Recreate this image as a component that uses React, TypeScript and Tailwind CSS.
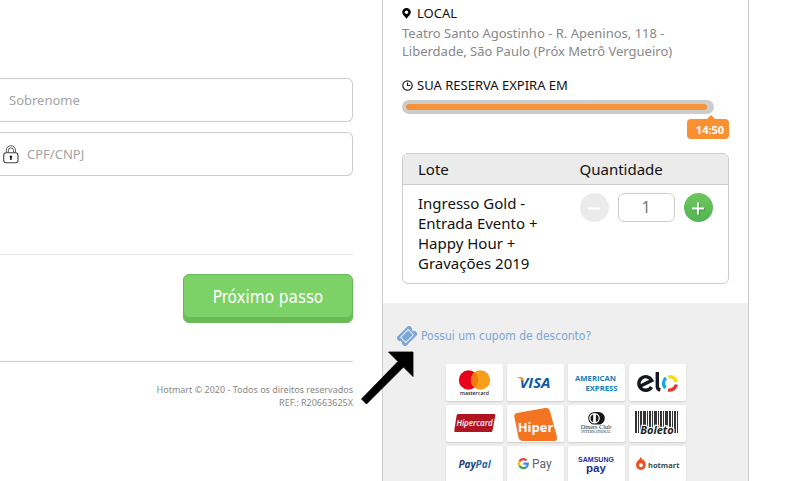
import { useState } from "react"
import type { ReactNode } from "react"

const MastercardLogo = () => (
  <svg viewBox="0 0 57 37" className="w-full h-full" aria-label="mastercard">
    <circle cx="22.5" cy="16" r="9.7" fill="#eb001b" />
    <circle cx="34.5" cy="16" r="9.7" fill="#f79e1b" />
    <path d="M28.5 8.4a9.7 9.7 0 0 1 0 15.2a9.7 9.7 0 0 1 0-15.2z" fill="#f47a10" />
    <text x="28.5" y="30.5" textAnchor="middle" fontSize="5.2" fontWeight="600" fill="#222">
      mastercard
    </text>
  </svg>
)

const VisaLogo = () => (
  <svg viewBox="0 0 57 37" className="w-full h-full" aria-label="Visa">
    <text x="28" y="24" textAnchor="middle" fontSize="15" fontWeight="700" fontStyle="italic" fill="#0e5ba4">
      VISA
    </text>
    <path d="M10 13h4.200c1 0 1.500.4 1.700 1.300l.9 4.200c-1.200-2.500-3.500-4.300-6.800-5.100z" fill="#e9a23b" />
  </svg>
)

const AmexLogo = () => (
  <svg viewBox="0 0 57 37" className="w-full h-full" aria-label="American Express">
    <g fontSize="7.7" fontWeight="700" fill="#0f80b8">
      <text x="27.5" y="17" textAnchor="middle">AMERICAN</text>
      <text x="33.5" y="26.5" textAnchor="middle">EXPRESS</text>
    </g>
  </svg>
)

const EloLogo = () => (
  <svg viewBox="0 0 57 37" className="w-full h-full" aria-label="elo">
    <g fill="none" strokeWidth="3.4">
      <path d="M11.5 22L22.8 16.500A6.800 6.800 0 1 0 22.500 23" stroke="#15171f" />
      <path d="M28.3 8v14.500c0 1.800 1 3 3 3.700" stroke="#15171f" />
      <path d="M37 14a6.800 6.800 0 0 0-.6 10" stroke="#19a5df" />
      <path d="M39.2 12.800a6.900 6.900 0 0 1 8.200 5.400" stroke="#fbd914" />
      <path d="M47.3 20.500a6.900 6.900 0 0 1-8.300 5.400" stroke="#e5352b" />
    </g>
  </svg>
)

const HipercardLogo = () => (
  <svg viewBox="0 0 57 37" className="w-full h-full" aria-label="Hipercard">
    <path d="M12.500 9h35.500c1 0 1.500.6 1.300 1.500l-2.800 14.900c-.2 1-.9 1.600-1.900 1.600h-35c-1 0-1.500-.6-1.300-1.500l2.300-14.900c.2-1 .9-1.600 1.900-1.600z" fill="#b01421" />
    <text x="28.5" y="20.5" textAnchor="middle" fontSize="8" fontStyle="italic" fontWeight="600" fill="#fff">
      Hipercard
    </text>
  </svg>
)

const HiperLogo = () => (
  <svg viewBox="0 0 57 37" className="w-full h-full" aria-label="Hiper">
    <path d="M10 8L38 3c2.600-.4 4.500.6 5 3.200L50 32c.6 2.500-.5 4-2.500 4H16c-2.600 0-4-1.200-4.500-3.500L7.500 13c-.6-2.800 0-4.500 2.500-5z" fill="#f37421" />
    <text x="28.5" y="26.5" textAnchor="middle" fontSize="13" fontWeight="700" fill="#fff">
      Hiper
    </text>
  </svg>
)

const DinersLogo = () => (
  <svg viewBox="0 0 57 37" className="w-full h-full" aria-label="Diners Club International">
    <path d="M26.500 7h4a6.300 6.300 0 0 1 0 12.600h-4a6.300 6.300 0 0 1 0-12.600z" fill="#171717" />
    <circle cx="26.5" cy="13.3" r="5.3" fill="#fff" />
    <path d="M25.200 9.500a4 4 0 0 0 0 7.600zM27.900 9.500a4 4 0 0 1 0 7.600z" fill="#171717" />
    <g fill="#222" fontFamily="Liberation Serif, serif" textAnchor="middle">
      <text x="28" y="24.3" fontSize="6.3">Diners Club</text>
      <text x="28" y="28.4" fontSize="3.7">INTERNATIONAL</text>
    </g>
  </svg>
)

const bars = [
  [6, 2], [9, 1], [11, 2], [14, 3], [18, 1], [20, 2], [23, 1], [25, 3], [29, 1],
  [31, 2], [34, 1], [36, 3], [40, 2], [43, 1], [45, 2], [48, 1],
]

const BoletoLogo = () => (
  <svg viewBox="0 0 57 37" className="w-full h-full" aria-label="Boleto">
    {bars.map(([x, width]) => (
      <rect key={x} x={x} y="6" width={width} height="22" fill="#333" />
    ))}
    <text
      x="28"
      y="29"
      textAnchor="middle"
      fontSize="11"
      fontWeight="700"
      fontStyle="italic"
      fill="#1c1c1c"
      stroke="#fff"
      strokeWidth="2.5"
      paintOrder="stroke"
    >
      Boleto
    </text>
  </svg>
)

const PaypalLogo = () => (
  <svg viewBox="0 0 57 37" className="w-full h-full" aria-label="PayPal">
    <text x="28.5" y="22" textAnchor="middle" fontSize="10" fontWeight="700" fontStyle="italic" fill="#1f3c78">
      Pay<tspan fill="#2b6aa8">Pal</tspan>
    </text>
  </svg>
)

const GooglePayLogo = () => (
  <svg viewBox="0 0 57 37" className="w-full h-full" aria-label="Google Pay">
    <g fill="none" strokeWidth="2.2">
      <path d="M19.500 14.500a4.500 4.500 0 0 0-7 .8" stroke="#ea4335" />
      <path d="M12.500 15.300a4.700 4.700 0 0 0 0 4.600" stroke="#fbbc04" />
      <path d="M12.500 19.900a4.600 4.600 0 0 0 6.800 1.300" stroke="#34a853" />
      <path d="M19.300 21.200c1-.9 1.500-2 1.500-3.500h-4.500" stroke="#4285f4" />
    </g>
    <text x="25" y="22" fontSize="12" fontFamily="Roboto, sans-serif" fill="#5f6368">
      Pay
    </text>
  </svg>
)

const SamsungPayLogo = () => (
  <svg viewBox="0 0 57 37" className="w-full h-full" aria-label="Samsung Pay">
    <g fill="#1e2f98" textAnchor="middle" fontFamily="Liberation Sans, sans-serif" fontWeight="700">
      <text x="28" y="15.5" fontSize="7">SAMSUNG</text>
      <text x="28" y="26" fontSize="11.5">pay</text>
    </g>
  </svg>
)

const HotmartLogo = () => (
  <svg viewBox="0 0 57 37" className="w-full h-full" aria-label="hotmart">
    <path d="M11.500 11c1.300.8 1.700 2 1.600 3.300c.7-.2 1-.8 1.100-1.400c1.600 1.800 2.600 4 2.600 6.200a4.900 4.900 0 0 1-9.800 0c0-2.400 1.200-3.800 2.600-5c1-.9 1.700-1.700 1.900-3.100z" fill="#ee4e23" />
    <circle cx="11.9" cy="19.2" r="2" fill="#fff" />
    <text x="19" y="21.5" fontSize="7.5" fontWeight="700" fill="#37474f">
      hotmart
    </text>
  </svg>
)

const payments: { name: string; logo: ReactNode }[] = [
  { name: "mastercard", logo: <MastercardLogo /> },
  { name: "visa", logo: <VisaLogo /> },
  { name: "amex", logo: <AmexLogo /> },
  { name: "elo", logo: <EloLogo /> },
  { name: "hipercard", logo: <HipercardLogo /> },
  { name: "hiper", logo: <HiperLogo /> },
  { name: "diners", logo: <DinersLogo /> },
  { name: "boleto", logo: <BoletoLogo /> },
  { name: "paypal", logo: <PaypalLogo /> },
  { name: "gpay", logo: <GooglePayLogo /> },
  { name: "samsung", logo: <SamsungPayLogo /> },
  { name: "hotmart", logo: <HotmartLogo /> },
]

const BuyerForm = () => (
  <form className="flex-1 min-w-0 pt-[78px] pr-[29px]" onSubmit={(e) => e.preventDefault()}>
    <div className="flex flex-col gap-[10px]">
      <input
        type="text"
        aria-label="Sobrenome"
        placeholder="Sobrenome"
        className="w-full h-11 pl-[9px] text-[13px] border border-l-0 border-[#ccc] rounded-r-md placeholder:text-[#a3a3a3] outline-none"
      />
      <label className="flex items-center h-11 pl-[3px] gap-2 border border-l-0 border-[#ccc] rounded-r-md">
        <svg viewBox="0 0 16 19" className="w-4 h-[19px] shrink-0" fill="none" stroke="#444">
          <rect x=".7" y="7.7" width="14.3" height="10" rx="2.5" strokeWidth="1.1" />
          <path d="M3.300 7.500V5.300a4.600 4.600 0 0 1 9.200 0v2.200M5.300 7.500V5.500a2.600 2.600 0 0 1 5.200 0v2" strokeWidth=".9" />
          <path d="M7.900 11v4" stroke="#111" strokeWidth="1.5" />
          <circle cx="7.9" cy="11.7" r=".8" fill="#111" stroke="#111" />
        </svg>
        <input
          type="text"
          aria-label="CPF/CNPJ"
          placeholder="CPF/CNPJ"
          className="flex-1 min-w-0 h-full text-[13px] placeholder:text-[#a3a3a3] outline-none"
        />
      </label>
    </div>
    <div className="mt-[78px] pt-[19px] border-t border-[#e8e8e8] flex justify-end">
      <button
        type="submit"
        className="w-[170px] h-[49px] pb-[2px] rounded-md border border-[#68b657] bg-[#7cd167] text-[17px] text-white shadow-[inset_0_-5px_0_#6abb58] font-['DejaVu_Sans_Condensed','Noto_Sans',sans-serif]"
      >
        Próximo passo
      </button>
    </div>
    <footer className="mt-[38px] pt-[21px] border-t border-[#ccc] text-right text-[9px] leading-[13px] text-[#888]">
      <p>Hotmart © 2020 - Todos os direitos reservados</p>
      <p>REF.: R20663625X</p>
    </footer>
  </form>
)

const LotTable = () => {
  const [quantity, setQuantity] = useState(1)

  return (
    <div className="mt-[39px] border border-[#ccc] rounded-md overflow-hidden">
      <table className="w-full table-fixed text-left text-[15px] text-[#111]">
        <thead className="bg-[#ebebeb]">
          <tr className="h-[30px] border-b border-[#ccc]">
            <th className="w-1/2 pl-[15px] font-normal">Lote</th>
            <th className="w-1/2 pl-[14px] font-normal">Quantidade</th>
          </tr>
        </thead>
        <tbody>
          <tr className="align-top">
            <td className="pl-[15px] pt-2 pb-[10px] leading-5">
              Ingresso Gold -<br />
              Entrada Evento +<br />
              Happy Hour +<br />
              Gravações 2019
            </td>
            <td className="pl-[14px] pt-2">
              <div className="flex items-center gap-[9px]">
                <button
                  type="button"
                  aria-label="Diminuir"
                  onClick={() => setQuantity(Math.max(1, quantity - 1))}
                  className="flex items-center justify-center w-[29px] h-[29px] rounded-full bg-[#ebebeb]"
                >
                  <svg viewBox="0 0 14 14" className="w-[14px] h-[14px]" stroke="#fff" strokeWidth="2">
                    <path d="M1 8.500h12" />
                  </svg>
                </button>
                <input
                  type="text"
                  aria-label="Quantidade"
                  value={quantity}
                  onChange={(e) => setQuantity(Number(e.target.value) || 1)}
                  className="w-[57px] h-[29px] text-center text-base text-[#777] border border-[#ccc] rounded-md outline-none"
                />
                <button
                  type="button"
                  aria-label="Aumentar"
                  onClick={() => setQuantity(quantity + 1)}
                  className="flex items-center justify-center w-[29px] h-[29px] rounded-full bg-linear-to-b from-[#6cc75c] to-[#55b355]"
                >
                  <svg viewBox="0 0 16 16" className="w-4 h-4" strokeWidth="2">
                    <path d="M3 10.500h12M9 4.500v12" stroke="#3f9440" />
                    <path d="M2 9.500h12M8 3.500v12" stroke="#fff" />
                  </svg>
                </button>
              </div>
            </td>
          </tr>
        </tbody>
      </table>
    </div>
  )
}

const OrderSummary = () => (
  <aside className="w-[367px] mr-[51px] shrink-0 flex flex-col border-x border-[#ccc]">
    <section className="pt-1 px-[19px] pb-[19px]">
      <h2 className="flex items-center gap-[6px] text-[13px] leading-[18px] text-[#111]">
        <svg viewBox="0 0 9 11" className="w-[9px] h-[11px]">
          <path d="M4.500 0a4.300 4.300 0 0 1 4.300 4.300c0 2.300-2.600 4.200-4.300 6.500C2.800 8.500.2 6.600.2 4.300A4.300 4.300 0 0 1 4.500 0z" fill="#000" />
          <circle cx="4.5" cy="4.2" r="1.7" fill="#fff" />
        </svg>
        LOCAL
      </h2>
      <p className="mt-[2px] text-[13px] leading-[18px] text-[#888]">
        Teatro Santo Agostinho - R. Apeninos, 118 -<br />
        Liberdade, São Paulo (Próx Metrô Vergueiro)
      </p>
      <h2 className="mt-4 flex items-center gap-1 text-[13px] leading-[18px] text-[#111]">
        <svg viewBox="0 0 11 11" className="w-[11px] h-[11px]" fill="none" stroke="#222" strokeWidth="1.2">
          <circle cx="5.5" cy="5.5" r="4.7" />
          <path d="M5.500 2.500v3h3" />
        </svg>
        SUA RESERVA EXPIRA EM
      </h2>
      <div className="relative mt-[6px] mr-[15px] h-[14px] px-1 py-[4px] rounded-full bg-[#ccc]">
        <div className="h-[6px] mr-[3px] rounded-full bg-[#f5923b]" />
        <div className="absolute -right-[15px] top-[19px] w-[42px] h-5 pl-1 rounded-sm bg-[#fb9033] text-center text-[11px] leading-[21px] font-bold text-white">
          <span className="absolute -top-1 left-5 border-x-4 border-b-4 border-x-transparent border-b-[#fb9033]" />
          14:50
        </div>
      </div>
      <LotTable />
    </section>
    <section className="flex-1 pt-[23px] bg-[#efefef]">
      <a
        href="#cupom"
        className="ml-[14px] flex items-center gap-[4px] text-xs leading-5 text-[#7ba6d6] font-['DejaVu_Sans_Condensed','Noto_Sans',sans-serif]"
      >
        <svg viewBox="0 0 20 20" className="w-5 h-5" fill="none">
          <g transform="rotate(-45 10 10)">
            <path
              d="M1.800 3.600h16.400a1 1 0 0 1 1 1v3.500a2 2 0 0 0 0 3.800v3.500a1 1 0 0 1-1 1H1.800a1 1 0 0 1-1-1v-3.500a2 2 0 0 0 0-3.800V4.600a1 1 0 0 1 1-1z"
              fill="#7ba6d6"
            />
            <rect x="4.6" y="6.3" width="10.8" height="7.4" stroke="#efefef" strokeWidth="1" />
          </g>
        </svg>
        Possui um cupom de desconto?
      </a>
      <ul className="mt-[18px] mx-auto w-[240px] grid grid-cols-4 gap-1 font-['Open_Sans','Noto_Sans',sans-serif]">
        {payments.map(({ name, logo }) => (
          <li key={name} className="h-[37px] rounded-xs bg-white shadow-[0_1px_2px_#ccc]">
            {logo}
          </li>
        ))}
      </ul>
    </section>
  </aside>
)

const App = () => (
  <main className="relative flex h-screen overflow-hidden bg-white font-['Noto_Sans','Open_Sans',sans-serif]">
    <BuyerForm />
    <OrderSummary />
    {/* pointer to the coupon link */}
    <svg viewBox="0 0 53 54" className="absolute left-[361px] top-[351px] w-[53px] h-[54px]">
      <path d="M27.500 1H52v24.500l-9.500-9.500L5.500 53 .5 48 37 10.500z" fill="#000" stroke="#000" strokeWidth=".8" />
    </svg>
  </main>
)

export default App
